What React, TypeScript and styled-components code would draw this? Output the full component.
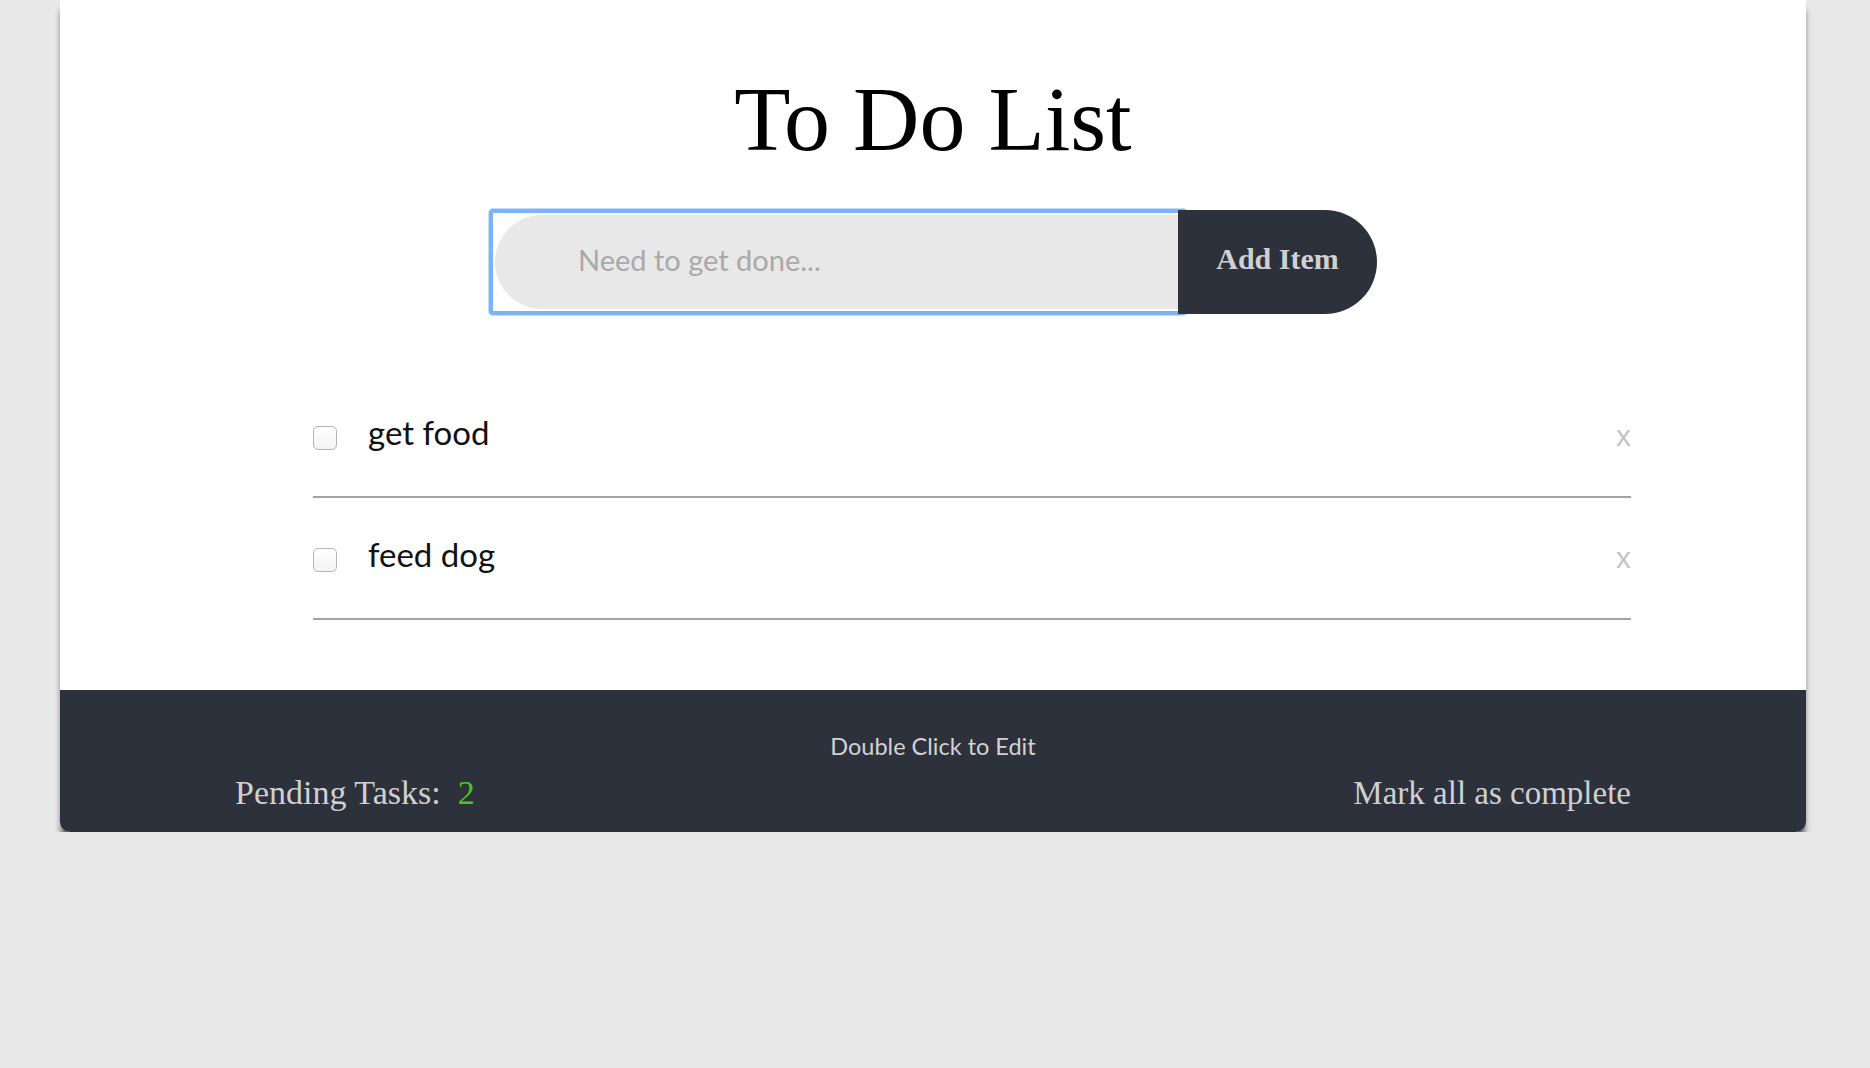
import styled, { createGlobalStyle } from 'styled-components';

const GlobalStyle = createGlobalStyle`
  html, body {
    margin: 0;
    padding: 0;
    background: #e8e8e8;
  }
  body {
    font-family: "Liberation Serif", serif;
  }
`;

interface ITodo {
  id: number;
  text: string;
  done: boolean;
}

const todos: ITodo[] = [
  { id: 1, text: 'get food', done: false },
  { id: 2, text: 'feed dog', done: false },
];

// Kortet med listan
const Card = styled.div`
  width: 1746px;
  margin-left: 60px;
  background: #fff;
  border-radius: 0 0 10px 10px;
  box-shadow: 0 9px 7px -2px rgba(0, 0, 0, 0.75);
`;

const Body = styled.div`
  padding: 73px 0 70px;
`;

const Title = styled.h1`
  margin: 0;
  text-align: center;
  font-family: "Liberation Serif", serif;
  font-weight: normal;
  font-size: 92px;
  line-height: 92px;
  color: #000;
`;

const Form = styled.form`
  display: flex;
  justify-content: center;
  align-items: flex-start;
  margin-top: 44px;
`;

// Fokusringen runt fältet (rektangulär som i äldre Chrome)
const InputFrame = styled.div`
  width: 686px;
  border: 4px solid #7cb3f5;
  box-shadow: 0 0 0 1px #c2dcfb;
  border-radius: 4px;
  padding: 2px;
  background: #fff;
`;

const TaskInput = styled.input`
  display: block;
  width: 100%;
  box-sizing: border-box;
  height: 94px;
  border: none;
  outline: none;
  background: #e8e8e8;
  border-radius: 50px 0 0 50px;
  padding: 0 0 5px 83px;
  font-family: Lato, "Liberation Sans", sans-serif;
  font-size: 29px;
  color: #333;

  &::placeholder {
    color: #a9a9a9;
  }
`;

const AddButton = styled.button`
  width: 199px;
  height: 104px;
  margin-top: 1px;
  margin-left: -9px;
  border: none;
  background: #2d313c;
  color: #d0d0d0;
  border-radius: 0 52px 52px 0;
  font-family: "Liberation Serif", serif;
  font-weight: bold;
  font-size: 30px;
  padding-bottom: 8px;
  position: relative;
  cursor: pointer;
`;

const List = styled.ul`
  list-style: none;
  margin: 61px 175px 0 253px;
  padding: 0;
`;

const Row = styled.li`
  display: flex;
  align-items: center;
  min-height: 116px;
  padding-top: 4px;
  border-bottom: 2px solid #a3a3a3;
`;

const Check = styled.span<{ $checked: boolean }>`
  width: 22px;
  height: 22px;
  border: 1px solid #b4b4b4;
  border-radius: 5px;
  background: ${({ $checked }) => ($checked ? '#2d313c' : 'linear-gradient(#fff, #f3f3f3)')};
  flex-shrink: 0;
`;

const ItemText = styled.span`
  margin-left: 31px;
  padding-bottom: 13px;
  font-family: Lato, "Liberation Sans", sans-serif;
  font-size: 33px;
  color: #111;
  flex: 1;
`;

const Remove = styled.span`
  font-family: "Liberation Sans", Arial, sans-serif;
  font-size: 30px;
  color: #c4c4c4;
  padding-bottom: 5px;
  cursor: pointer;
`;

const Footer = styled.footer`
  background: #2d313c;
  border-radius: 0 0 10px 10px;
  padding: 41px 175px 20px;
  color: #d0d0d0;
`;

const Hint = styled.div`
  text-align: center;
  font-family: Lato, "Liberation Sans", sans-serif;
  font-size: 23.5px;
  line-height: 30px;
  color: #d2d2d2;
`;

const FooterRow = styled.div`
  display: flex;
  justify-content: space-between;
  align-items: baseline;
  margin-top: 13px;
  font-family: "Liberation Serif", serif;
  font-size: 33px;
  color: #d0d0d0;
`;

const Pending = styled.span`
  font-size: 34px;
`;

const Count = styled.span`
  color: #4cc51e;
  margin-left: 17px;
`;

const App = () => {
  const pending = todos.filter((t) => !t.done).length;

  return (
    <>
      <GlobalStyle />
      <Card>
        <Body>
          <Title>To Do List</Title>
          <Form onSubmit={(e) => e.preventDefault()}>
            <InputFrame>
              <TaskInput placeholder="Need to get done..." />
            </InputFrame>
            <AddButton type="submit">Add Item</AddButton>
          </Form>
          <List>
            {todos.map((todo) => (
              <Row key={todo.id}>
                <Check $checked={todo.done} />
                <ItemText>{todo.text}</ItemText>
                <Remove>x</Remove>
              </Row>
            ))}
          </List>
        </Body>
        <Footer>
          <Hint>Double Click to Edit</Hint>
          <FooterRow>
            <Pending>
              Pending Tasks:<Count>{pending}</Count>
            </Pending>
            <span>Mark all as complete</span>
          </FooterRow>
        </Footer>
      </Card>
    </>
  );
};

export default App;
